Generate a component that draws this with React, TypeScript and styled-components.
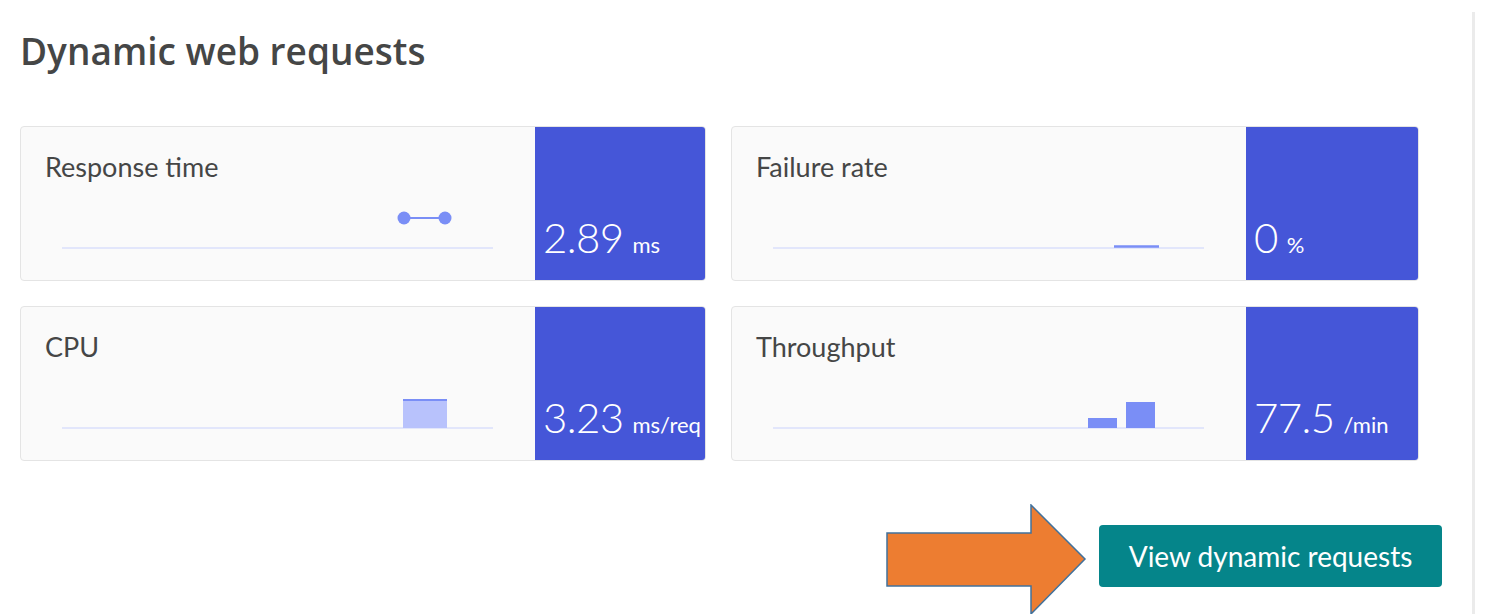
import React from "react";
import styled, { createGlobalStyle } from "styled-components";

const GlobalStyle = createGlobalStyle`
  html, body {
    margin: 0;
    padding: 0;
    background: #ffffff;
    overflow: hidden;
  }
  body {
    font-family: Lato, "Noto Sans", sans-serif;
  }
  * { box-sizing: border-box; }
`;

const Page = styled.div`
  margin-top: 12px;
  width: 1475px;
  height: calc(100vh - 12px);
  border-right: 3px solid #ebebeb;
  padding: 18px 30px 0 20px;
`;

const Title = styled.h1`
  margin: 0;
  font-family: "Open Sans", Lato, sans-serif;
  font-weight: 600;
  font-size: 37px;
  line-height: 42px;
  color: #454646;
`;

const Grid = styled.div`
  margin-top: 54px;
  width: 1399px;
  display: grid;
  grid-template-columns: 686px 688px;
  column-gap: 25px;
  row-gap: 25px;
`;

const Card = styled.div`
  height: 155px;
  display: grid;
  grid-template-columns: 1fr ${(p: { $panel: number }) => p.$panel}px;
  background: #fafafa;
  border: 1px solid #e4e4e4;
  border-radius: 4px;
  overflow: hidden;
`;

const Left = styled.div`
  display: flex;
  flex-direction: column;
  padding: 24px 0 29px 24px;
`;

const Label = styled.div`
  font-size: 27px;
  line-height: 32px;
  color: #454646;
`;

const Chart = styled.svg`
  display: block;
  margin-top: auto;
  margin-left: 17px;
  width: 431px;
  height: 60px;
`;

const Panel = styled.div`
  background: #4556d8;
  display: flex;
  align-items: flex-end;
  padding: 0 3px 22px 8px;
  color: #ffffff;
  white-space: nowrap;
`;

const Value = styled.span`
  font-weight: 300;
  font-size: 42px;
  line-height: 42px;
  letter-spacing: -0.6px;
`;

const Unit = styled.span`
  font-weight: 400;
  font-size: 22px;
  margin-left: 9px;
`;

const Footer = styled.div`
  margin-top: 43px;
  display: flex;
  justify-content: flex-end;
  align-items: flex-start;
  gap: 12px;
`;

const Arrow = styled.svg`
  display: block;
  width: 202px;
  height: 112px;
`;

const Button = styled.button`
  margin-top: 21px;
  width: 343px;
  height: 62px;
  border: none;
  border-radius: 4px;
  background: #05858a;
  color: #ffffff;
  font-family: Lato, "Noto Sans", sans-serif;
  font-size: 28px;
  padding: 0;
  cursor: pointer;
`;

const BASE = "#e2e6fb";
const LINE = "#7a8ef6";

const Baseline = () => (
  <line x1="0" y1="57" x2="431" y2="57" stroke={BASE} strokeWidth="2" />
);

type Metric = {
  label: string;
  value: string;
  unit: string;
  panel: number;
  chart: React.ReactNode;
};

const metrics: Metric[] = [
  {
    label: "Response time",
    value: "2.89",
    unit: "ms",
    panel: 170,
    chart: (
      <>
        <Baseline />
        <line x1="342" y1="27" x2="383" y2="27" stroke={LINE} strokeWidth="2" />
        <circle cx="342" cy="27" r="6.5" fill={LINE} />
        <circle cx="383" cy="27" r="6.5" fill={LINE} />
      </>
    ),
  },
  {
    label: "Failure rate",
    value: "0",
    unit: "%",
    panel: 172,
    chart: (
      <>
        <Baseline />
        <line x1="341" y1="55.5" x2="386" y2="55.5" stroke={LINE} strokeWidth="2.5" />
      </>
    ),
  },
  {
    label: "CPU",
    value: "3.23",
    unit: "ms/req",
    panel: 170,
    chart: (
      <>
        <Baseline />
        <rect x="341" y="29" width="44" height="28" fill="#b8c2fc" />
        <line x1="341" y1="29" x2="385" y2="29" stroke={LINE} strokeWidth="2" />
      </>
    ),
  },
  {
    label: "Throughput",
    value: "77.5",
    unit: "/min",
    panel: 172,
    chart: (
      <>
        <Baseline />
        <rect x="315" y="47" width="29" height="10" fill={LINE} />
        <rect x="353" y="31" width="29" height="26" fill={LINE} />
      </>
    ),
  },
];

export default function App() {
  return (
    <>
      <GlobalStyle />
      <Page>
        <Title>Dynamic web requests</Title>
        <Grid>
          {metrics.map((m) => (
            <Card key={m.label} $panel={m.panel}>
              <Left>
                <Label>{m.label}</Label>
                <Chart viewBox="0 0 431 60">{m.chart}</Chart>
              </Left>
              <Panel>
                <Value>{m.value}</Value>
                <Unit>{m.unit}</Unit>
              </Panel>
            </Card>
          ))}
        </Grid>
        <Footer>
          <Arrow viewBox="0 0 202 112">
            <polygon
              points="2,29 146,29 146,1 200,55 146,110 146,82 2,82"
              fill="#ed7d31"
              stroke="#41719c"
              strokeWidth="1.5"
              strokeLinejoin="miter"
            />
          </Arrow>
          <Button>View dynamic requests</Button>
        </Footer>
      </Page>
    </>
  );
}
